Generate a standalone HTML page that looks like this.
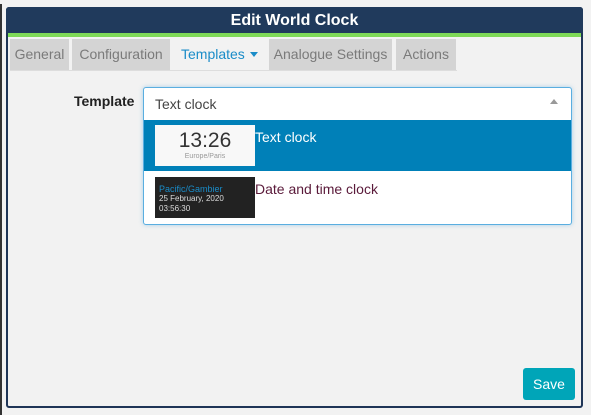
<!DOCTYPE html><html><head><style>
body{margin:0;width:591px;height:415px;background:#f2f2f2;font-family:"Liberation Sans","DejaVu Sans",sans-serif;position:relative;overflow:hidden}
.a{position:absolute}
.tab{position:absolute;top:39px;height:31px;background:#d4d4d4;color:#7a7a7a;font-size:14px;line-height:31px;text-align:center}
</style></head><body>
<div class="a" style="left:0;top:4px;width:2px;height:411px;background:#333"></div>
<div class="a" style="left:6px;top:7px;width:573px;height:397px;border:2px solid #1f3557;border-radius:3px;background:#f2f2f2"></div>
<div class="a" style="left:6px;top:7px;width:577px;height:26px;background:#203a5c;border-radius:3px 3px 0 0;color:#fff;font-weight:bold;font-size:16px;line-height:28px;text-align:center">Edit World Clock</div>
<div class="a" style="left:8px;top:33px;width:573px;height:4px;background:#7ed957"></div>
<div class="tab" style="left:10px;width:59px">General</div>
<div class="tab" style="left:72px;width:98px">Configuration</div>
<div class="tab" style="left:173px;width:93px;background:#f2f2f2;color:#1a8cc8;text-align:left"><span style="margin-left:8px">Templates</span></div>
<div class="a" style="left:250px;top:52px;width:0;height:0;border-left:4px solid transparent;border-right:4px solid transparent;border-top:5px solid #1a8cc8"></div>
<div class="tab" style="left:269px;width:123px">Analogue Settings</div>
<div class="tab" style="left:396px;width:60px">Actions</div>
<div class="a" style="left:10px;top:70px;width:447px;height:1px;background:#ddd"></div>
<div class="a" style="left:74px;top:93px;font-weight:bold;font-size:14px;color:#222">Template</div>
<div class="a" style="left:143px;top:87px;width:427px;height:136px;border:1px solid #5aaee0;border-radius:3px;background:#fff;box-shadow:0 0 4px rgba(90,174,224,.5)"></div>
<div class="a" style="left:155px;top:96px;font-size:14px;color:#444">Text clock</div>
<div class="a" style="left:550px;top:99px;width:0;height:0;border-left:4px solid transparent;border-right:4px solid transparent;border-bottom:5px solid #999"></div>
<div class="a" style="left:144px;top:120px;width:427px;height:51px;background:#0080b8"></div>
<div class="a" style="left:155px;top:125px;width:100px;height:41px;background:#f8f8f8;text-align:center">
<div style="font-size:21px;color:#333;line-height:24px;margin-top:4px">13:26</div>
<div style="font-size:7px;color:#999">Europe/Paris</div></div>
<div class="a" style="left:255px;top:129px;font-size:14px;color:#fff">Text clock</div>
<div class="a" style="left:155px;top:177px;width:96px;height:41px;background:#222;padding-left:4px;font-size:8px;line-height:10px;color:#ddd">
<div style="color:#1a8cc8;margin-top:7px;font-size:9px">Pacific/Gambier</div>25 February, 2020<br>03:56:30</div>
<div class="a" style="left:255px;top:181px;font-size:14px;color:#5a1a3a">Date and time clock</div>
<div class="a" style="left:523px;top:368px;width:52px;height:32px;background:#00a5b8;border-radius:3px;color:#fff;font-size:14px;line-height:32px;text-align:center">Save</div>
</body></html>
